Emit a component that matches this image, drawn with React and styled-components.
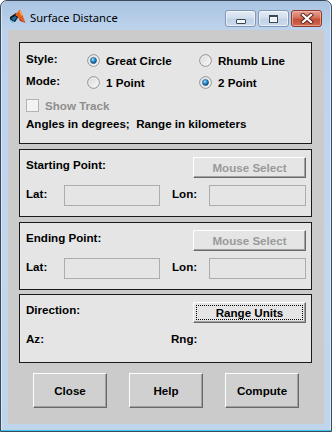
import React from 'react';
import styled, { createGlobalStyle } from 'styled-components';

const FONT = `"Liberation Sans", Arial, sans-serif`;

const Global = createGlobalStyle`
  html, body { margin: 0; padding: 0; background: #ffffff; }
  body { font-family: ${FONT}; }
  * { box-sizing: border-box; }
`;

const Window = styled.div`
  width: 332px;
  height: 432px;
  display: flex;
  flex-direction: column;
  padding: 0 7px 7px 7px;
  border: 1px solid #3a4a5e;
  border-top-left-radius: 7px;
  border-top-right-radius: 7px;
  background: linear-gradient(to bottom, #a9c3e1 0px, #bdd3ec 28px, #c2d7ee 60%, #bfd5ec 100%);
  box-shadow: inset 0 -1px 0 #3fc6e8, inset 1px 0 0 #dbe7f5, inset -1px 0 0 #dbe7f5;
`;

const TitleBar = styled.div`
  height: 29px;
  flex-shrink: 0;
  display: flex;
  align-items: flex-start;
`;

const AppIcon = styled.svg`
  flex-shrink: 0;
  margin: 8px 4px 0 2px;
`;

const Title = styled.div`
  flex: 1;
  margin-top: 9px;
  font-family: "Segoe UI", "Noto Sans", sans-serif;
  font-size: 11.2px;
  line-height: 16px;
  color: #000;
`;

const CaptionGroup = styled.div`
  display: flex;
  gap: 2px;
  margin: 9px 2px 0 0;
`;

const CaptionButton = styled.div`
  width: 31px;
  height: 17px;
  border-radius: 3px;
  display: flex;
  align-items: center;
  justify-content: center;
  border: 1px solid ${p => (p.$close ? '#8c3a2c' : '#8197b4')};
  background: ${p =>
    p.$close
      ? 'linear-gradient(to bottom, #e6a093 0%, #d4705b 45%, #c44e37 55%, #cf6a50 100%)'
      : 'linear-gradient(to bottom, #e3ecf6 0%, #d2dfee 45%, #c2d3e8 55%, #ccdbec 100%)'};
  box-shadow: inset 0 0 0 1px ${p => (p.$close ? 'rgba(255,200,190,0.55)' : 'rgba(255,255,255,0.6)')};
`;

const MinGlyph = styled.span`
  width: 10px;
  height: 5px;
  margin-top: 6px;
  background: #f4f7fb;
  border: 1px solid #3a4654;
  border-radius: 1px;
`;

const MaxGlyph = styled.span`
  width: 9px;
  height: 8px;
  background: #e9eff7;
  border: 1px solid #3a4654;
  border-top-width: 2px;
  box-shadow: inset 0 0 0 1px #f7f9fc;
`;

const Client = styled.div`
  width: 316px;
  height: 394px;
  flex-shrink: 0;
  background: #cbcbcb;
  padding: 12px 0 0 11px;
  display: flex;
  flex-direction: column;
`;

const Panel = styled.div`
  width: 293px;
  height: ${p => p.$h}px;
  margin-top: ${p => p.$mt || 0}px;
  flex-shrink: 0;
  background: #e5e5e5;
  border: 1px solid #1a1a1a;
  padding: 7px 5px 0 6px;
  display: flex;
  flex-direction: column;
`;

const OptionsGrid = styled.div`
  display: grid;
  grid-template-columns: 61px 112px 1fr;
  grid-template-rows: 21px 22px 24px 12px;
`;

const Label = styled.div`
  font-family: ${FONT};
  font-weight: bold;
  font-size: 11.6px;
  line-height: 13px;
  color: ${p => (p.$disabled ? '#8e8e8e' : '#000')};
  white-space: pre;
`;

const RowLabel = styled(Label)`
  align-self: center;
  margin-bottom: 4px;
`;

const Option = styled.div`
  display: flex;
  align-items: center;
  gap: 6px;
`;

const WideCell = styled.div`
  grid-column: 1 / -1;
  display: flex;
  align-items: center;
  gap: 6px;
`;

const CheckBox = styled.span`
  width: 13px;
  height: 13px;
  flex-shrink: 0;
  border: 1px solid #b4b4b4;
  background: #f3f3f3;
`;

const TopRow = styled.div`
  height: 21px;
  display: flex;
  align-items: flex-start;
  justify-content: space-between;
`;

const TopLabel = styled(Label)`
  margin-top: 1px;
`;

const FieldRow = styled.div`
  margin-top: 7px;
  height: 21px;
  display: grid;
  grid-template-columns: 38px 96px 49px 97px;
  align-items: start;
`;

const FieldLabel = styled(Label)`
  margin-top: 2px;
  padding-left: ${p => p.$indent || 0}px;
`;

const Field = styled.div`
  height: 21px;
  border: 1px solid #acacac;
  background: #e5e5e5;
`;

const PushButton = styled.div`
  width: ${p => p.$w}px;
  height: ${p => p.$h}px;
  display: flex;
  align-items: stretch;
  padding: 2px;
  background: ${p => p.$bg};
  border-top: 1px solid #ffffff;
  border-left: 1px solid #ffffff;
  border-right: 1px solid #6a6a6a;
  border-bottom: 1px solid #6a6a6a;
  box-shadow: inset -1px -1px 0 #a0a0a0;
`;

const ButtonFace = styled.div`
  flex: 1;
  display: flex;
  align-items: center;
  justify-content: center;
  border: 1px ${p => (p.$focus ? 'dotted #000' : 'solid transparent')};
  font-family: ${FONT};
  font-weight: bold;
  font-size: 11.6px;
  color: ${p => (p.$disabled ? '#9a9a9a' : '#000')};
`;

const ButtonBar = styled.div`
  display: flex;
  gap: 22px;
  margin: 10px 0 0 14px;
`;

function Radio({ checked }) {
  return (
    <svg width="13" height="13" viewBox="0 0 13 13">
      <defs>
        <linearGradient id="rbg" x1="0" y1="0" x2="1" y2="1">
          <stop offset="0" stopColor="#d6d6d6" />
          <stop offset="1" stopColor="#fbfbfb" />
        </linearGradient>
        <radialGradient id="rdot" cx="0.4" cy="0.35" r="0.7">
          <stop offset="0" stopColor="#a9e6ff" />
          <stop offset="0.45" stopColor="#2a8fd0" />
          <stop offset="1" stopColor="#0c3f72" />
        </radialGradient>
      </defs>
      <circle cx="6.5" cy="6.5" r="5.8" fill="url(#rbg)" stroke="#8c8c8c" strokeWidth="1" />
      <circle cx="6.5" cy="6.5" r="4.6" fill="none" stroke="#f4f4f4" strokeWidth="0.8" />
      {checked && <circle cx="6.5" cy="6.5" r="3.1" fill="url(#rdot)" stroke="#1a4f7e" strokeWidth="0.5" />}
    </svg>
  );
}

function MatlabIcon() {
  return (
    <AppIcon width="16" height="16" viewBox="0 0 16 16">
      <polygon points="0,8 6,4 9,7 5,13 0,11" fill="#151515" />
      <polygon points="1,9.5 5,7 7,8.5 4,12" fill="#1e6ea6" />
      <polygon points="0,10 4,13 2,14" fill="#49c4ea" />
      <polygon points="5,6 10,0.5 12.5,6 15.5,14 11,10.5 8,8" fill="#e4601c" />
      <polygon points="10,0.5 12.5,6 11.5,7 9.5,3.5" fill="#f5b040" />
      <polygon points="8,8 11,10.5 15.5,14 10,12" fill="#b73a12" />
    </AppIcon>
  );
}

function PanelFields() {
  return (
    <FieldRow>
      <FieldLabel>Lat:</FieldLabel>
      <Field />
      <FieldLabel $indent={12}>Lon:</FieldLabel>
      <Field />
    </FieldRow>
  );
}

export default function App() {
  return (
    <>
      <Global />
      <Window>
        <TitleBar>
          <MatlabIcon />
          <Title>Surface Distance</Title>
          <CaptionGroup>
            <CaptionButton><MinGlyph /></CaptionButton>
            <CaptionButton><MaxGlyph /></CaptionButton>
            <CaptionButton $close>
              <svg width="14" height="11" viewBox="0 0 14 11">
                <path d="M3 2 L11 9 M11 2 L3 9" stroke="#5a2218" strokeWidth="4" strokeLinecap="square" />
                <path d="M3 2 L11 9 M11 2 L3 9" stroke="#ffffff" strokeWidth="2.2" strokeLinecap="square" />
              </svg>
            </CaptionButton>
          </CaptionGroup>
        </TitleBar>
        <Client>
          <Panel $h={102}>
            <OptionsGrid>
              <RowLabel>Style:</RowLabel>
              <Option><Radio checked /><Label>Great Circle</Label></Option>
              <Option><Radio /><Label>Rhumb Line</Label></Option>
              <RowLabel>Mode:</RowLabel>
              <Option><Radio /><Label>1 Point</Label></Option>
              <Option><Radio checked /><Label>2 Point</Label></Option>
              <WideCell><CheckBox /><Label $disabled>Show Track</Label></WideCell>
              <WideCell><Label>{'Angles in degrees;  Range in kilometers'}</Label></WideCell>
            </OptionsGrid>
          </Panel>
          <Panel $h={68} $mt={5}>
            <TopRow>
              <TopLabel>Starting Point:</TopLabel>
              <PushButton $w={113} $h={21} $bg="#e5e5e5"><ButtonFace $disabled>Mouse Select</ButtonFace></PushButton>
            </TopRow>
            <PanelFields />
          </Panel>
          <Panel $h={68} $mt={5}>
            <TopRow>
              <TopLabel>Ending Point:</TopLabel>
              <PushButton $w={113} $h={21} $bg="#e5e5e5"><ButtonFace $disabled>Mouse Select</ButtonFace></PushButton>
            </TopRow>
            <PanelFields />
          </Panel>
          <Panel $h={69} $mt={4}>
            <TopRow>
              <TopLabel>Direction:</TopLabel>
              <PushButton $w={113} $h={21} $bg="#e5e5e5"><ButtonFace $focus>Range Units</ButtonFace></PushButton>
            </TopRow>
            <FieldRow>
              <FieldLabel>Az:</FieldLabel>
              <span />
              <FieldLabel $indent={11}>Rng:</FieldLabel>
              <span />
            </FieldRow>
          </Panel>
          <ButtonBar>
            <PushButton $w={74} $h={35} $bg="#d0d0d0"><ButtonFace>Close</ButtonFace></PushButton>
            <PushButton $w={74} $h={35} $bg="#d0d0d0"><ButtonFace>Help</ButtonFace></PushButton>
            <PushButton $w={74} $h={35} $bg="#d0d0d0"><ButtonFace>Compute</ButtonFace></PushButton>
          </ButtonBar>
        </Client>
      </Window>
    </>
  );
}
